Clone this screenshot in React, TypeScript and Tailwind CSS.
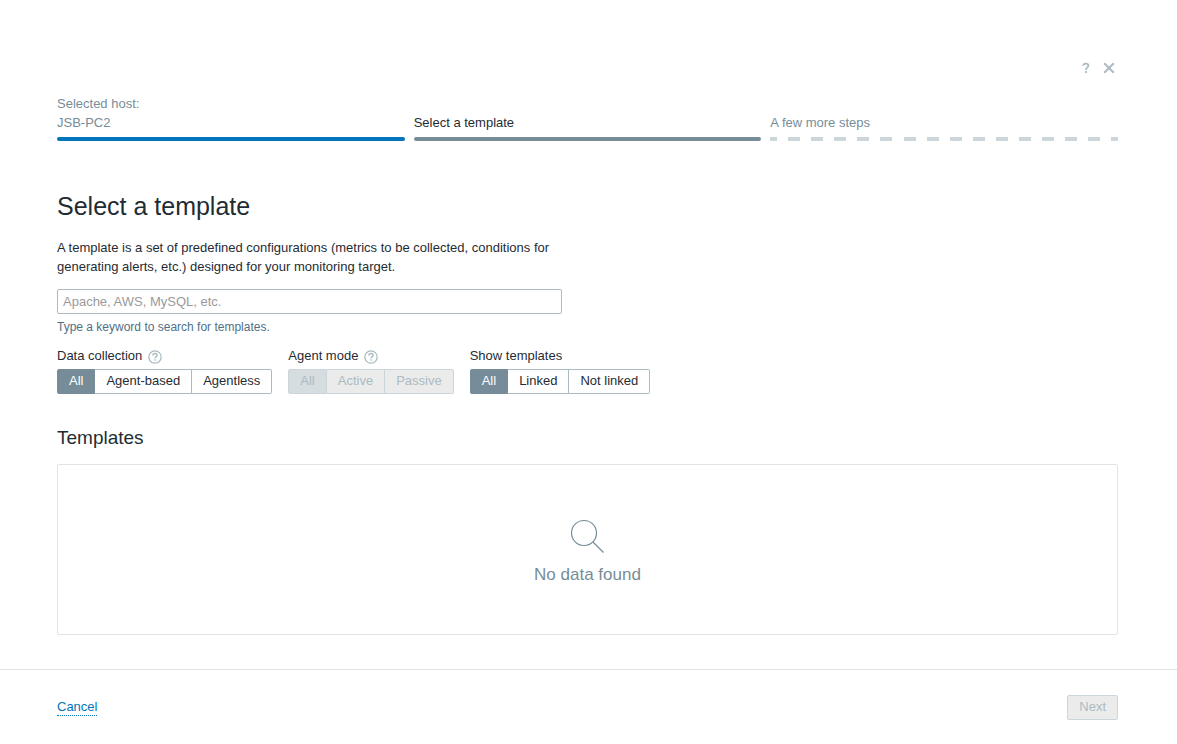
import { useState } from 'react'

const filters = [
  {
    name: 'data-collection',
    label: 'Data collection',
    help: true,
    disabled: false,
    options: ['All', 'Agent-based', 'Agentless'],
  },
  {
    name: 'agent-mode',
    label: 'Agent mode',
    help: true,
    disabled: true,
    options: ['All', 'Active', 'Passive'],
  },
  {
    name: 'show-templates',
    label: 'Show templates',
    help: false,
    disabled: false,
    options: ['All', 'Linked', 'Not linked'],
  },
]

function HelpIcon() {
  return (
    <svg width="14" height="14" viewBox="0 0 14 14" fill="none" stroke="#acbbc2" aria-hidden="true">
      <circle cx="7" cy="7" r="6.2" strokeWidth="1.3" />
      <path d="M4.9 5.5c0-1.3.8-2 2.1-2s2.1.7 2.1 1.8c0 1.4-2 1.4-2 3" strokeWidth="1.4" />
      <path d="M7.1 9.3v1.5" strokeWidth="1.5" />
    </svg>
  )
}

function Filter({ name, label, help, disabled, options }: (typeof filters)[number]) {
  const [value, setValue] = useState('All')

  return (
    <fieldset disabled={disabled} className="flex flex-col">
      <legend className="mb-1 h-[19px]">
        <span className="flex items-center gap-[6px]">
          {label}
          {help && (
            <button type="button" aria-label={`About ${label}`} className="mt-[2px]">
              <HelpIcon />
            </button>
          )}
        </span>
      </legend>
      <div className="flex h-[25px]">
        {options.map((option) => (
          <label
            key={option}
            className={
              disabled
                ? 'relative flex items-center border border-l-0 border-[#ccd5d9] bg-[#ebebeb] px-[11px] pb-[2px] text-[#acbbc2] first:rounded-l-xs first:border-l last:rounded-r-xs has-checked:bg-[#d6dde0]'
                : 'relative flex items-center border border-l-0 border-[#acbbc2] bg-white px-[11px] pb-[2px] first:rounded-l-xs first:border-l last:rounded-r-xs has-checked:border-[#768d99] has-checked:bg-[#768d99] has-checked:text-white'
            }
          >
            <input
              type="radio"
              name={name}
              value={option}
              checked={value === option}
              onChange={() => setValue(option)}
              className="sr-only"
            />
            {option}
          </label>
        ))}
      </div>
    </fieldset>
  )
}

function Dashes() {
  return (
    <div className="flex h-1 justify-between">
      {Array.from({ length: 16 }, (_, i) => (
        <span key={i} className="w-3 bg-[#ccd5d9] first:w-[7px] last:w-[7px]" />
      ))}
    </div>
  )
}

export default function App() {
  return (
    <div className="min-h-screen bg-white font-['Liberation_Sans',Arial,sans-serif] text-[13px] leading-[19px] text-[#1f2c33]">
      <main className="pt-[58px] pr-[59px] pl-[57px]">
        <div className="flex h-5 items-center justify-end gap-[6px] text-[#acbbc2]">
          <a href="#help" aria-label="Help" className="flex size-4 items-center justify-center">
            <svg width="8" height="12" viewBox="0 0 8 12" fill="none" stroke="currentColor" strokeWidth="1.8">
              <path d="M1.2 3.8C1.3 2.2 2.3 1.6 3.8 1.6s2.6.8 2.6 2.1c0 1.8-2.4 1.7-2.4 4.2" />
              <path d="M4 9v1.9" />
            </svg>
          </a>
          <button type="button" aria-label="Close" className="flex size-[18px] items-center justify-center">
            <svg width="12" height="12" viewBox="0 0 12 12" fill="none" stroke="currentColor" strokeWidth="2">
              <path d="M1.2 1.2l9.6 9.6M10.8 1.2l-9.6 9.6" />
            </svg>
          </button>
        </div>

        {/* Progress */}
        <ol className="mt-4 grid grid-cols-3 items-end gap-[9px] text-[#768d99]">
          <li>
            <div>Selected host:</div>
            <div className="mb-[5px]">JSB-PC2</div>
            <div className="h-1 rounded-xs bg-[#0275b8]" />
          </li>
          <li aria-current="step">
            <div className="mb-[5px] text-[#1f2c33]">Select a template</div>
            <div className="h-1 rounded-xs bg-[#768d99]" />
          </li>
          <li>
            <div className="mb-[5px]">A few more steps</div>
            <Dashes />
          </li>
        </ol>

        <h1 className="mt-[49px] text-[25px] leading-8">Select a template</h1>
        <p className="mt-4 max-w-[505px]">
          A template is a set of predefined configurations (metrics to be collected, conditions for
          generating alerts, etc.) designed for your monitoring target.
        </p>

        <input
          type="text"
          aria-label="Search templates"
          aria-describedby="search-hint"
          placeholder="Apache, AWS, MySQL, etc."
          className="mt-[13px] block h-[25px] w-full max-w-[505px] rounded-xs border border-[#acbbc2] px-[5px] placeholder:text-[#9a9a9a]"
        />
        <p id="search-hint" className="mt-1 text-xs leading-[19px] text-[#4f7087]">
          Type a keyword to search for templates.
        </p>

        <div className="mt-[9px] flex flex-wrap gap-4">
          {filters.map((filter) => (
            <Filter key={filter.name} {...filter} />
          ))}
        </div>

        {/* Results */}
        <h2 className="mt-8 text-[19px] leading-6">Templates</h2>
        <div className="mt-[14px] flex flex-col items-center rounded-xs border border-[#dfe4e7] pt-[53px] pb-[47px] text-[#768d99]">
          <svg width="36" height="36" viewBox="0 0 36 36" fill="none" stroke="currentColor" strokeWidth="1.2" aria-hidden="true">
            <circle cx="14" cy="15" r="12.5" />
            <path d="M23 24l10.5 10.5" />
          </svg>
          <p className="mt-[9px] text-[17px] leading-6">No data found</p>
        </div>
      </main>

      <footer className="mt-[34px] flex items-start justify-between border-t border-[#dfe4e7] pt-[25px] pr-[59px] pb-6 pl-[57px]">
        <a href="#cancel" className="mt-[3px] flex border-b border-dotted border-b-[#0275b8] leading-[17px] text-[#0275b8]">
          Cancel
        </a>
        <button
          type="button"
          disabled
          className="h-[25px] rounded-xs border border-[#ccd5d9] bg-[#ebebeb] px-[11px] pb-[2px] text-[#acbbc2]"
        >
          Next
        </button>
      </footer>
    </div>
  )
}
